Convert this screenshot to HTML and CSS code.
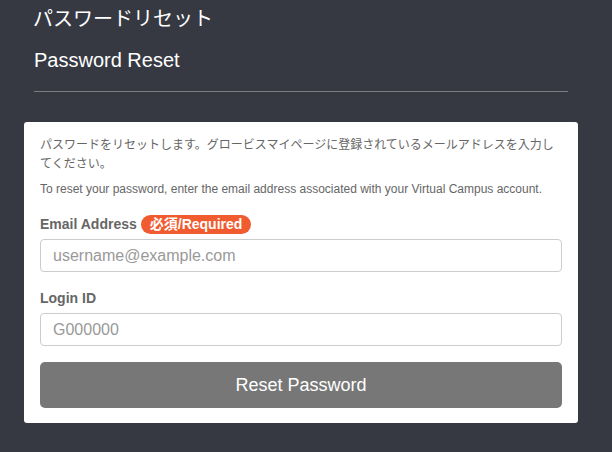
FILE: index.html
```html
<!DOCTYPE html>
<html lang="ja">
<head>
    <meta charset="UTF-8">
    <meta name="viewport" content="width=device-width, initial-scale=1.0">
    <title>Password Reset</title>
    <link rel="stylesheet" href="styles.css">
</head>
<body>
    <div class="wrap">
        <div class="page-head">
            <h1 class="title-ja">パスワードリセット</h1>
            <h2 class="title-en">Password Reset</h2>
        </div>
        <form class="card" action="#" method="post">
            <p class="lead-ja">パスワードをリセットします。グロービスマイページに登録されているメールアドレスを入力してください。</p>
            <p class="lead-en">To reset your password, enter the email address associated with your Virtual Campus account.</p>

            <label for="email" class="field-label">Email Address <span class="badge">必須/Required</span></label>
            <input type="email" id="email" name="email" placeholder="username@example.com">

            <label for="login-id" class="field-label">Login ID</label>
            <input type="text" id="login-id" name="login_id" placeholder="G000000">

            <button type="submit" class="reset-button">Reset Password</button>
        </form>
    </div>
</body>
</html>
```

FILE: styles.css
```css
body {
    margin: 0;
    background-color: #363942;
    font-family: "Liberation Sans", Arial, "Noto Sans CJK JP", sans-serif;
}
.wrap {
    width: 554px;
    margin-left: 24px;
}
.page-head {
    margin: 0 10px;
    padding-top: 3px;
    padding-bottom: 17px;
    border-bottom: 1px solid #7a7c82;
    color: #ffffff;
}
.title-ja {
    margin: 0 0 0 -1px;
    font-family: "Noto Sans CJK JP", sans-serif;
    font-size: 20px;
    font-weight: normal;
    line-height: 30px;
}
.title-en {
    margin: 13px 0 0;
    font-size: 20px;
    font-weight: normal;
    line-height: 28px;
}
.card {
    margin-top: 30px;
    background-color: #ffffff;
    border-radius: 3px;
    padding: 12px 16px 15px;
}
.lead-ja {
    margin: 0;
    font-family: "Noto Sans CJK JP", sans-serif;
    font-size: 12px;
    line-height: 19px;
    color: #666666;
}
.lead-en {
    margin: 8px 0 0;
    font-size: 12px;
    line-height: 18px;
    color: #666666;
}
.field-label {
    display: flex;
    align-items: center;
    gap: 4px;
    margin-top: 16px;
    height: 20px;
    font-size: 14px;
    font-weight: bold;
    color: #666666;
}
.badge {
    padding: 0 9px;
    border-radius: 10px;
    background-color: #f15b30;
    color: #ffffff;
    font-size: 14px;
    line-height: 19px;
}
input {
    display: block;
    width: 100%;
    height: 33px;
    margin-top: 5px;
    padding: 0 12px;
    box-sizing: border-box;
    border: 1px solid #cccccc;
    border-radius: 4px;
    font-family: "Liberation Sans", Arial, sans-serif;
    font-size: 16px;
    color: #333333;
}
input::placeholder {
    color: #999999;
}
.reset-button {
    display: block;
    width: 100%;
    height: 46px;
    margin-top: 16px;
    border: none;
    border-radius: 5px;
    background-color: #777777;
    color: #ffffff;
    font-family: "Liberation Sans", Arial, sans-serif;
    font-size: 18px;
    cursor: pointer;
}
```
